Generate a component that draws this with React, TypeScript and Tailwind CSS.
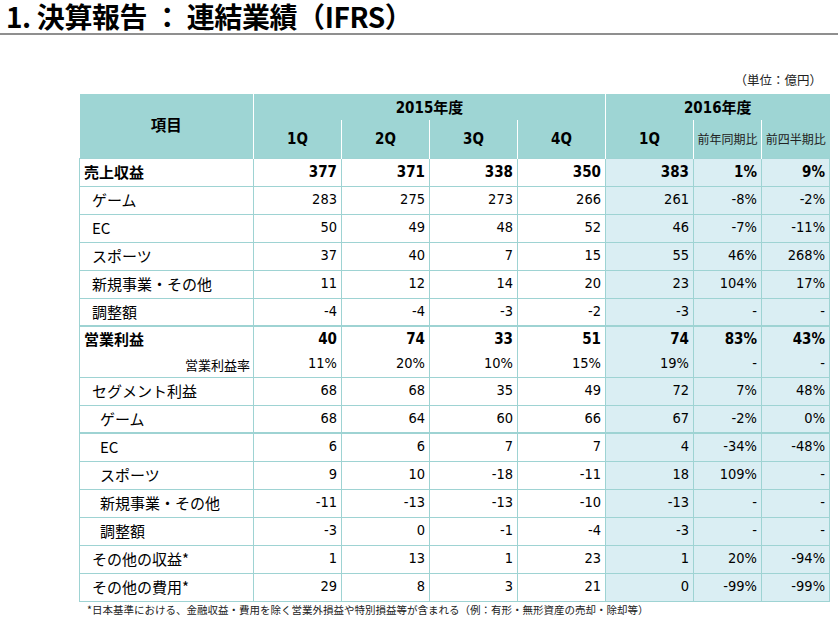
import React from "react";

interface Row {
  label: string;
  level: 0 | 1 | 2 | 3;
  bold?: boolean;
  thickTop?: boolean;
  noBottom?: boolean;
  rate?: boolean;
  values: string[];
}

const rows: Row[] = [
  { label: "売上収益", level: 0, bold: true, values: ["377", "371", "338", "350", "383", "1%", "9%"] },
  { label: "ゲーム", level: 1, values: ["283", "275", "273", "266", "261", "-8%", "-2%"] },
  { label: "EC", level: 1, values: ["50", "49", "48", "52", "46", "-7%", "-11%"] },
  { label: "スポーツ", level: 1, values: ["37", "40", "7", "15", "55", "46%", "268%"] },
  { label: "新規事業・その他", level: 1, values: ["11", "12", "14", "20", "23", "104%", "17%"] },
  { label: "調整額", level: 1, values: ["-4", "-4", "-3", "-2", "-3", "-", "-"] },
  { label: "営業利益", level: 0, bold: true, thickTop: true, noBottom: true, values: ["40", "74", "33", "51", "74", "83%", "43%"] },
  { label: "営業利益率", level: 3, rate: true, values: ["11%", "20%", "10%", "15%", "19%", "-", "-"] },
  { label: "セグメント利益", level: 1, values: ["68", "68", "35", "49", "72", "7%", "48%"] },
  { label: "ゲーム", level: 2, values: ["68", "64", "60", "66", "67", "-2%", "0%"] },
  { label: "EC", level: 2, thickTop: true, values: ["6", "6", "7", "7", "4", "-34%", "-48%"] },
  { label: "スポーツ", level: 2, values: ["9", "10", "-18", "-11", "18", "109%", "-"] },
  { label: "新規事業・その他", level: 2, values: ["-11", "-13", "-13", "-10", "-13", "-", "-"] },
  { label: "調整額", level: 2, values: ["-3", "0", "-1", "-4", "-3", "-", "-"] },
  { label: "その他の収益*", level: 1, values: ["1", "13", "1", "23", "1", "20%", "-94%"] },
  { label: "その他の費用*", level: 1, values: ["29", "8", "3", "21", "0", "-99%", "-99%"] },
];

// numbers look like a narrow Verdana, condensed DejaVu is the nearest
const numFont = "font-['DejaVu_Sans_Condensed','DejaVu_Sans',sans-serif] font-stretch-condensed";
const jpFont = "font-['Noto_Sans_CJK_JP',sans-serif]";

function rowHeight(r: Row) {
  if (r.noBottom) return "h-[26px]";
  if (r.rate) return "h-[25px]";
  return "h-[28px]";
}

function labelPad(r: Row) {
  if (r.level === 0) return "pl-[4px] text-left";
  if (r.level === 1) return "pl-[12px] text-left";
  if (r.level === 2) return "pl-[20px] text-left";
  return "pr-[3px] text-right";
}

export default function App() {
  return (
    <div className={`w-[838px] h-[623px] bg-white text-black ${jpFont}`}>
      <div className="h-[35px] border-b-2 border-[#8f8f8f] pl-[6px]">
        <h1 className={`${jpFont} text-[28px] font-bold leading-[33px] tracking-[-0.4px] whitespace-nowrap`}>
          1. 決算報告 ： 連結業績（IFRS）
        </h1>
      </div>

      <div className="h-[59px] flex items-end justify-end pr-[16px] pb-[6px]">
        <span className={`text-[12.5px] leading-[16px] ${jpFont} text-[#222]`}>（単位：億円）</span>
      </div>

      <table className="ml-[79px] w-[751px] table-fixed border-collapse">
        <colgroup>
          <col className="w-[174px]" />
          <col className="w-[88px]" />
          <col className="w-[88px]" />
          <col className="w-[88px]" />
          <col className="w-[88px]" />
          <col className="w-[88px]" />
          <col className="w-[68px]" />
          <col className="w-[68px]" />
        </colgroup>
        <thead className="bg-[#9ed5d4]">
          <tr className="h-[26px]">
            <th rowSpan={2} className={`border-r border-white text-[15.5px] font-bold ${jpFont} pb-[3px]`}>
              項目
            </th>
            <th colSpan={4} className={`border-r border-white text-[15px] font-bold pt-[2px] ${numFont}`}>
              2015<span className={jpFont}>年度</span>
            </th>
            <th colSpan={3} className={`text-[15px] font-bold pt-[2px] ${numFont}`}>
              2016<span className={jpFont}>年度</span>
            </th>
          </tr>
          <tr className="h-[38px]">
            {["1Q", "2Q", "3Q", "4Q", "1Q"].map((q, i) => (
              <th key={i} className={`border-r border-white text-[15px] font-bold ${numFont}`}>
                {q}
              </th>
            ))}
            <th className={`border-r border-white text-[12px] font-normal ${jpFont} text-[#222]`}>前年同期比</th>
            <th className={`text-[12px] font-normal ${jpFont} text-[#222]`}>前四半期比</th>
          </tr>
        </thead>
        <tbody>
          {rows.map((r, ri) => {
            const top = r.thickTop ? "border-t-2" : r.rate ? "border-t-0" : "border-t";
            const bottom = r.noBottom ? "border-b-0" : "border-b";
            return (
              <tr key={ri} className={rowHeight(r)}>
                <td
                  className={`border-x ${top} ${bottom} border-[#9ed3d3] p-0 whitespace-nowrap ${labelPad(r)} ${
                    r.rate ? "text-[13px]" : "text-[15px]"
                  } ${r.bold ? "font-bold" : ""} ${jpFont}`}
                >
                  {r.label}
                </td>
                {r.values.map((v, vi) => (
                  <td
                    key={vi}
                    className={`border-x ${top} ${bottom} border-[#9ed3d3] p-0 pr-[4px] text-right whitespace-nowrap ${numFont} ${
                      vi >= 4 ? "bg-[#daeef3]" : "bg-white"
                    } ${r.bold ? "font-bold text-[15px]" : "text-[14.5px]"}`}
                  >
                    {v}
                  </td>
                ))}
              </tr>
            );
          })}
        </tbody>
      </table>

      <div className={`pl-[87px] pt-[1px] text-[10.5px] leading-[14px] ${jpFont} text-[#222]`}>
        *日本基準における、金融収益・費用を除く営業外損益や特別損益等が含まれる（例：有形・無形資産の売却・除却等）
      </div>
    </div>
  );
}
